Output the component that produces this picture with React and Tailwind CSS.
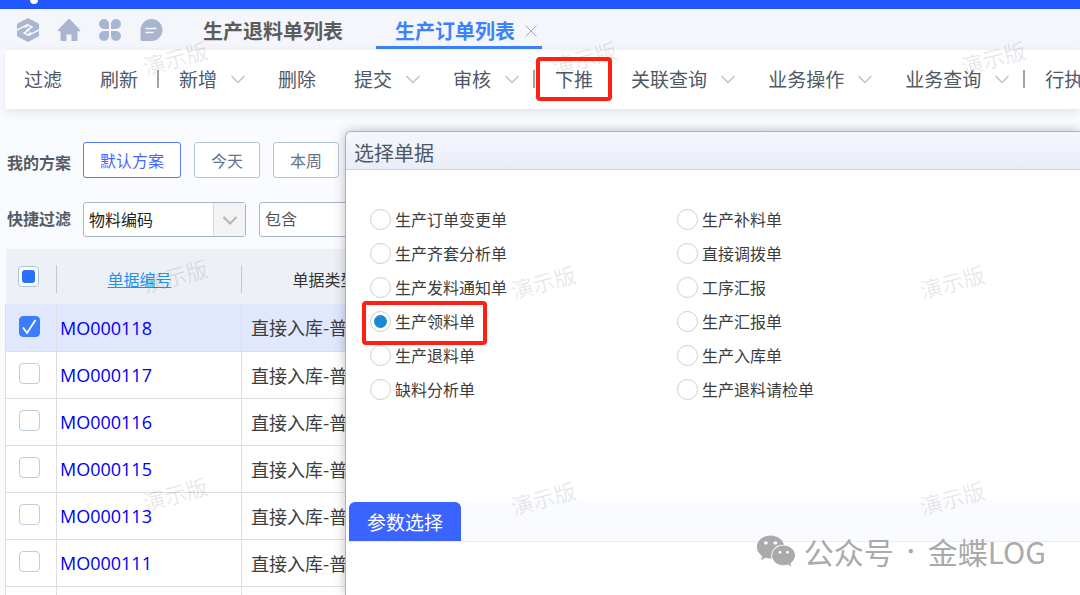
import React, { useState } from 'react';
import { FaWeixin } from 'react-icons/fa';

const toolbar = [
  { label: '过滤' },
  { label: '刷新' },
  { divider: true },
  { label: '新增', menu: true },
  { label: '删除' },
  { label: '提交', menu: true },
  { label: '审核', menu: true },
  { divider: true },
  { label: '下推', marked: true },
  { label: '关联查询', menu: true },
  { label: '业务操作', menu: true },
  { label: '业务查询', menu: true },
  { divider: true },
  { label: '行执行', menu: true },
];

const schemes = ['默认方案', '今天', '本周'];

const orders = ['MO000118', 'MO000117', 'MO000116', 'MO000115', 'MO000113', 'MO000111', 'MO000110'];

const targets = [
  '生产订单变更单', '生产补料单',
  '生产齐套分析单', '直接调拨单',
  '生产发料通知单', '工序汇报',
  '生产领料单', '生产汇报单',
  '生产退料单', '生产入库单',
  '缺料分析单', '生产退料请检单',
];

function Chevron({ className }) {
  return (
    <svg viewBox="0 0 16 16" className={className} fill="none" stroke="currentColor" aria-hidden="true">
      <path d="M1.5 5 8 11.5 14.5 5" />
    </svg>
  );
}

function Watermark() {
  return <span className="block w-[66px] -rotate-[15deg] text-[22px] leading-8 text-black/10">演示版</span>;
}

function NavIcons() {
  return (
    <nav className="flex items-center gap-[17px] text-[#aab6d0]">
      <a href="#logo" aria-label="金蝶">
        <svg viewBox="0 0 24 26" className="h-[26px] w-6" aria-hidden="true">
          <path fill="currentColor" stroke="currentColor" strokeLinejoin="round" d="M12 1.500 22.500 7v12L12 24.500 1.500 19V7z" />
          <path fill="none" stroke="#f4f6fb" strokeWidth="1.500" d="M0 13.500 11.500 7.500 16 10 10.500 13.500M12.500 8 8.500 10.500M24 12.500 12.500 18.500 8 16 13.500 12.500M11.500 18 15.500 15.500" />
        </svg>
      </a>
      <a href="#home" aria-label="首页">
        <svg viewBox="0 0 24 24" className="h-6 w-6" fill="currentColor" aria-hidden="true">
          <path d="M12 1q.7 0 1.200.5L23.300 12.200q.7.900-.5 1.100H20.500V22q0 1-1 1H14.500V16.500h-5V23H4.500q-1 0-1-1V13.300H1.200Q0 13.100.7 12.200L10.800 1.500Q11.300 1 12 1z" />
        </svg>
      </a>
      <a href="#apps" aria-label="应用">
        <svg viewBox="0 0 24 24" className="h-6 w-6" fill="currentColor" aria-hidden="true">
          <path d="M11 11H6A5 5 0 1 1 11 6zM13 11V6a5 5 0 1 1 5 5zM11 13v5a5 5 0 1 1-5-5zM13 13h5a5 5 0 1 1-5 5z" />
        </svg>
      </a>
      <a href="#messages" aria-label="消息">
        <svg viewBox="0 0 24 24" className="h-6 w-6" aria-hidden="true">
          <path fill="currentColor" d="M12.500 1a11 11 0 0 1 0 22H3q-1.500 0-1.500-1.500V12A11 11 0 0 1 12.500 1z" />
          <path fill="none" stroke="#f4f6fb" strokeWidth="1.500" strokeLinecap="round" d="M7 10.500h10M7 14.500h7" />
        </svg>
      </a>
    </nav>
  );
}

function TabBar() {
  return (
    <header>
      <div className="flex h-[9px] items-start overflow-hidden bg-[#2257ff] pl-[30px]">
        <span className="-mt-1 h-2 w-2 rounded-full bg-white" />
      </div>
      <div className="flex h-[41px] items-center bg-[#f4f6fb] pl-4">
        <NavIcons />
        <div className="ml-3 flex h-full text-xl font-bold">
          <button className="pl-7 pr-[33px] pt-[2px] text-[#5c5c5c]">生产退料单列表</button>
          <div className="mb-[1px] flex items-center border-b-[3px] border-[#3b82fb] pl-[19px] pr-[5px] pt-[6px]">
            <button className="text-[#3b82fb]">生产订单列表</button>
            <button aria-label="关闭" className="ml-[10px] text-[#a3abba]">
              <svg viewBox="0 0 12 12" className="h-3 w-3" stroke="currentColor" aria-hidden="true">
                <path d="M.5.500l11 11M11.500.500l-11 11" />
              </svg>
            </button>
          </div>
        </div>
      </div>
    </header>
  );
}

function Toolbar() {
  return (
    <div className="ml-[5px] flex h-[59px] shrink-0 items-center bg-white pb-[2px] shadow-[0_3px_8px_rgba(60,90,150,0.14)]">
      {toolbar.map((item, i) =>
        item.divider ? (
          <span key={i} className="mr-px h-[18px] w-[2px] shrink-0 bg-[#a3a3a3]" />
        ) : (
          <button
            key={i}
            className={`relative flex shrink-0 items-center gap-[13px] whitespace-nowrap pl-[19px] text-[19px] leading-7 text-[#4f5864] ${item.menu ? 'pr-[13px]' : 'pr-[19px]'}`}
          >
            {item.label}
            {item.menu && <Chevron className="h-4 w-4 stroke-[1.5] text-[#bcc2cd]" />}
            {item.marked && (
              <span className="absolute -inset-y-2 inset-x-0 z-20 rounded border-4 border-[#ff2015]" />
            )}
          </button>
        )
      )}
    </div>
  );
}

function Filters() {
  return (
    <div className="flex flex-col gap-6 pb-3 pl-[7px] pt-[33px] text-base">
      <div className="flex items-center">
        <span className="w-[76px] shrink-0 pt-1 font-bold text-[#555b66]">我的方案</span>
        <div className="flex gap-[13px]">
          {schemes.map((name, i) => (
            <button
              key={name}
              className={`h-9 rounded-[3px] border bg-white px-4 pb-px ${i === 0 ? 'border-[#5478ff] text-[#4468ff]' : 'border-[#b3c6d8] text-[#64748b]'}`}
            >
              {name}
            </button>
          ))}
        </div>
      </div>
      <div className="flex items-center">
        <label htmlFor="field" className="w-[76px] shrink-0 pb-1 font-bold text-[#555b66]">快捷过滤</label>
        <div className="relative mr-[13px]">
          <select
            id="field"
            className="h-[35px] w-[163px] appearance-none rounded-[3px] border border-[#a9b3cc] bg-white px-[5px] pb-[2px] text-[#222]"
          >
            <option>物料编码</option>
          </select>
          <span className="pointer-events-none absolute inset-y-px right-px flex w-8 items-center justify-center border-l border-[#ddd] bg-[#f3f3f3]">
            <Chevron className="h-4 w-4 stroke-2 text-[#b5b5b5]" />
          </span>
        </div>
        <select
          aria-label="条件"
          className="h-[35px] w-[163px] appearance-none rounded-[3px] border border-[#a9b3cc] bg-white px-[5px] pb-[4px] text-[#555]"
        >
          <option>包含</option>
        </select>
      </div>
    </div>
  );
}

function OrderTable() {
  const [selected, setSelected] = useState(['MO000118']);

  const toggle = (id) =>
    setSelected(selected.includes(id) ? selected.filter((s) => s !== id) : [...selected, id]);

  return (
    <div className="ml-[5px]">
      <table className="w-full table-fixed border-collapse text-left">
        <colgroup>
          <col className="w-[51px]" />
          <col className="w-[185px]" />
          <col />
        </colgroup>
        <thead>
          <tr className="h-[55px] bg-[#edf0f7] text-base text-[#333]">
            <th className="p-0 pt-1 font-normal">
              <div className="flex h-7 items-center border-r border-[#c4c8cf] pb-1 pl-3">
                <label className="relative flex">
                  <input type="checkbox" aria-label="全选" className="h-[21px] w-[21px] appearance-none rounded border border-[#a9c3dc] bg-white" />
                  <span className="absolute inset-1 rounded-[3px] bg-[#2b6fff]" />
                </label>
              </div>
            </th>
            <th className="p-0 pt-1 font-normal">
              <div className="flex h-7 items-center justify-center border-r border-[#c4c8cf] pr-[18px]">
                <a href="#sort" className="text-[#2492eb] underline">单据编号</a>
              </div>
            </th>
            <th className="p-0 pl-[51px] pt-1 font-normal">单据类型</th>
          </tr>
        </thead>
        <tbody>
          {orders.map((id) => {
            const on = selected.includes(id);
            return (
              <tr key={id} className={`h-[47px] border-b border-[#dedede] text-lg ${on ? 'bg-[#e1e8fe]' : 'bg-white'}`}>
                <td className="border-x border-[#dedede] p-0 pl-[13px]">
                  <label className="relative flex pb-[2px]">
                    <input
                      type="checkbox"
                      aria-label={id}
                      checked={on}
                      onChange={() => toggle(id)}
                      className="h-[21px] w-[21px] appearance-none rounded border border-[#bccddd] bg-white checked:border-[#3b7dff] checked:bg-[#3b7dff]"
                    />
                    {on && (
                      <svg viewBox="0 0 21 21" className="absolute h-[21px] w-[21px]" fill="none" stroke="#fff" strokeWidth="1.800" aria-hidden="true">
                        <path d="M4 11.500 8 17 16.500 4" />
                      </svg>
                    )}
                  </label>
                </td>
                <td className="border-r border-[#dedede] p-0 pl-[3px]">
                  <a href={`#${id}`} className="font-['Open_Sans'] text-[#0000f5]">{id}</a>
                </td>
                <td className="p-0 pl-[9px] text-[#3d3d3d]">直接入库-普通生产</td>
              </tr>
            );
          })}
        </tbody>
      </table>
    </div>
  );
}

function PushDialog() {
  const [target, setTarget] = useState('生产领料单');

  return (
    <section
      role="dialog"
      aria-labelledby="dialog-title"
      className="absolute bottom-0 left-[345px] right-0 top-[131px] z-10 flex flex-col overflow-hidden rounded-tl-md border-l border-t border-[#aeb1b8] bg-white shadow-[0_0_12px_rgba(0,0,0,0.25)]"
    >
      <h2 id="dialog-title" className="flex h-[38px] shrink-0 items-center border-b border-[#cbd0dc] bg-linear-to-b from-[#f5f7fc] to-[#e9edf8] px-2 pt-1 text-xl text-[#4f5864]">
        选择单据
      </h2>
      <div className="grid grid-cols-[307px_1fr] pb-[94px] pl-6 pt-8">
        {targets.map((name) => (
          <div key={name} className="flex h-[34px] items-center">
            <label className="relative flex items-center gap-1 text-base text-[#3d3d3d]">
              <input
                type="radio"
                name="target"
                checked={target === name}
                onChange={() => setTarget(name)}
                className="h-[21px] w-[21px] appearance-none rounded-full border border-[#cfcfcf] bg-white checked:bg-[#1a8ad8] checked:bg-clip-content checked:p-[3px]"
              />
              {name}
              {name === '生产领料单' && (
                <span className="pointer-events-none absolute -bottom-3 -left-2 -right-3 -top-2 rounded border-4 border-[#ff2015]" />
              )}
            </label>
          </div>
        ))}
      </div>
      <div className="flex items-end border-b border-[#e6edf3] bg-[#fafbff] pl-[3px] pt-[2px]">
        <button className="h-[39px] rounded-t-md bg-[#3a63ff] px-[18px] pt-[2px] text-[19px] text-white">参数选择</button>
      </div>
      <div className="pointer-events-none absolute left-[164px] top-[133px] grid grid-cols-[409px_66px] gap-y-[184px]">
        <Watermark />
        <Watermark />
        <Watermark />
        <Watermark />
      </div>
      <div className="absolute bottom-6 right-[34px] flex items-center text-3xl text-[#aaa]">
        <FaWeixin className="mr-2 h-10 w-10" />
        <span>公众号</span>
        <span className="w-[34px] text-center text-xl">·</span>
        <span>金蝶LOG</span>
      </div>
    </section>
  );
}

export default function App() {
  return (
    <div className="relative flex h-screen flex-col overflow-hidden bg-[#fafbff] font-['Noto_Sans_CJK_SC',sans-serif]">
      <TabBar />
      <Toolbar />
      <Filters />
      <OrderTable />
      <div className="pointer-events-none absolute left-[142px] top-[41px] grid grid-cols-[409px_409px_66px] gap-y-[186px]">
        <Watermark />
        <Watermark />
        <Watermark />
        <div className="col-span-3"><Watermark /></div>
        <div className="col-span-3"><Watermark /></div>
      </div>
      <PushDialog />
    </div>
  );
}
